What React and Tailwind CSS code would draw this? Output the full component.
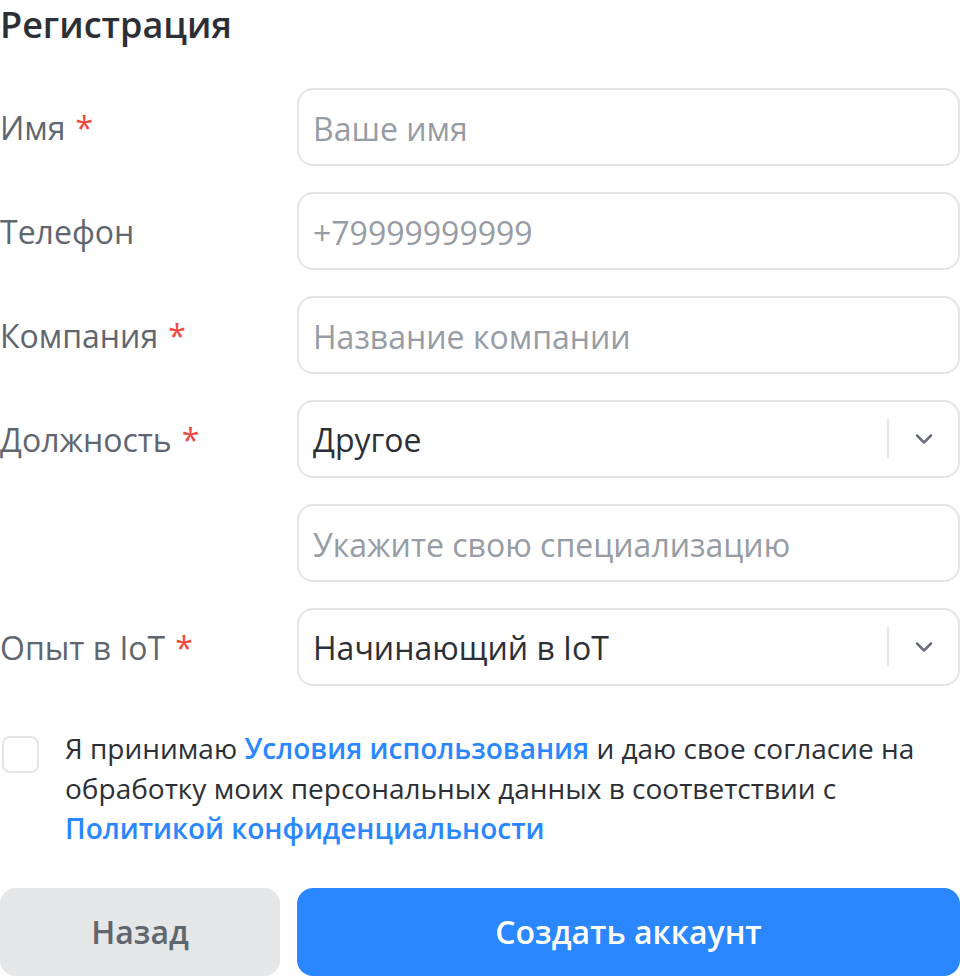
import { ChevronDown } from "lucide-react"

const font = { fontFamily: '"Open Sans", "Noto Sans", sans-serif' }

function Label({ children, required }) {
  return (
    <div className="w-[297px] shrink-0 h-[78px] pt-[2px] flex items-center text-[32px] text-[#5f6670]">
      {children}
      {required && <span className="ml-[10px] text-[#f0483e]">*</span>}
    </div>
  )
}

function Input({ placeholder }) {
  return (
    <input
      placeholder={placeholder}
      className="flex-1 h-[78px] rounded-[16px] border-2 border-[#e4e5e7] px-[14px] pt-[2px] text-[32px] text-[#2c2f36] placeholder:text-[#979ca4] outline-none"
      style={font}
    />
  )
}

function Select({ value }) {
  return (
    <div className="flex-1 h-[78px] rounded-[16px] border-2 border-[#e4e5e7] flex items-center pl-[14px] text-[32px] text-[#2c2f36]">
      <span className="flex-1 pt-[2px]">{value}</span>
      <div className="w-[2px] h-[40px] bg-[#e4e5e7]" />
      <div className="w-[69px] flex items-center justify-center text-[#6b717a]">
        <ChevronDown size={28} strokeWidth={2.2} />
      </div>
    </div>
  )
}

export default function App() {
  return (
    <div className="w-[960px] h-[976px] overflow-hidden bg-white" style={font}>
      <h1 className="text-[36px] font-semibold text-[#2c2f36] leading-[50px] mb-[38px]">Регистрация</h1>

      <div className="flex flex-col gap-[26px]">
        <div className="flex">
          <Label required>Имя</Label>
          <Input placeholder="Ваше имя" />
        </div>
        <div className="flex">
          <Label>Телефон</Label>
          <Input placeholder="+79999999999" />
        </div>
        <div className="flex">
          <Label required>Компания</Label>
          <Input placeholder="Название компании" />
        </div>
        <div className="flex">
          <Label required>Должность</Label>
          <Select value="Другое" />
        </div>
        <div className="flex">
          <div className="w-[297px] shrink-0" />
          <Input placeholder="Укажите свою специализацию" />
        </div>
        <div className="flex">
          <Label required>Опыт в IoT</Label>
          <Select value="Начинающий в IoT" />
        </div>
      </div>

      <div className="flex mt-[42px] pr-[20px]">
        <div className="w-[65px] shrink-0 pt-[8px]">
          <div className="ml-[2px] w-[37px] h-[37px] rounded-[8px] border-2 border-[#e4e5e7]" />
        </div>
        <p className="text-[28px] leading-[40px] text-[#2c2f36]">
          Я принимаю <a className="text-[#2a87ff] font-semibold">Условия использования</a> и даю свое согласие на
          обработку моих персональных данных в соответствии с{" "}
          <a className="text-[#2a87ff] font-semibold">Политикой конфиденциальности</a>
        </p>
      </div>

      <div className="flex gap-[17px] mt-[40px]">
        <button className="w-[280px] h-[88px] rounded-[16px] bg-[#e4e6e7] text-[32px] font-semibold text-[#5f6670]">
          Назад
        </button>
        <button className="flex-1 h-[88px] rounded-[16px] bg-[#2a87ff] text-[32px] font-semibold text-white">
          Создать аккаунт
        </button>
      </div>
    </div>
  )
}
